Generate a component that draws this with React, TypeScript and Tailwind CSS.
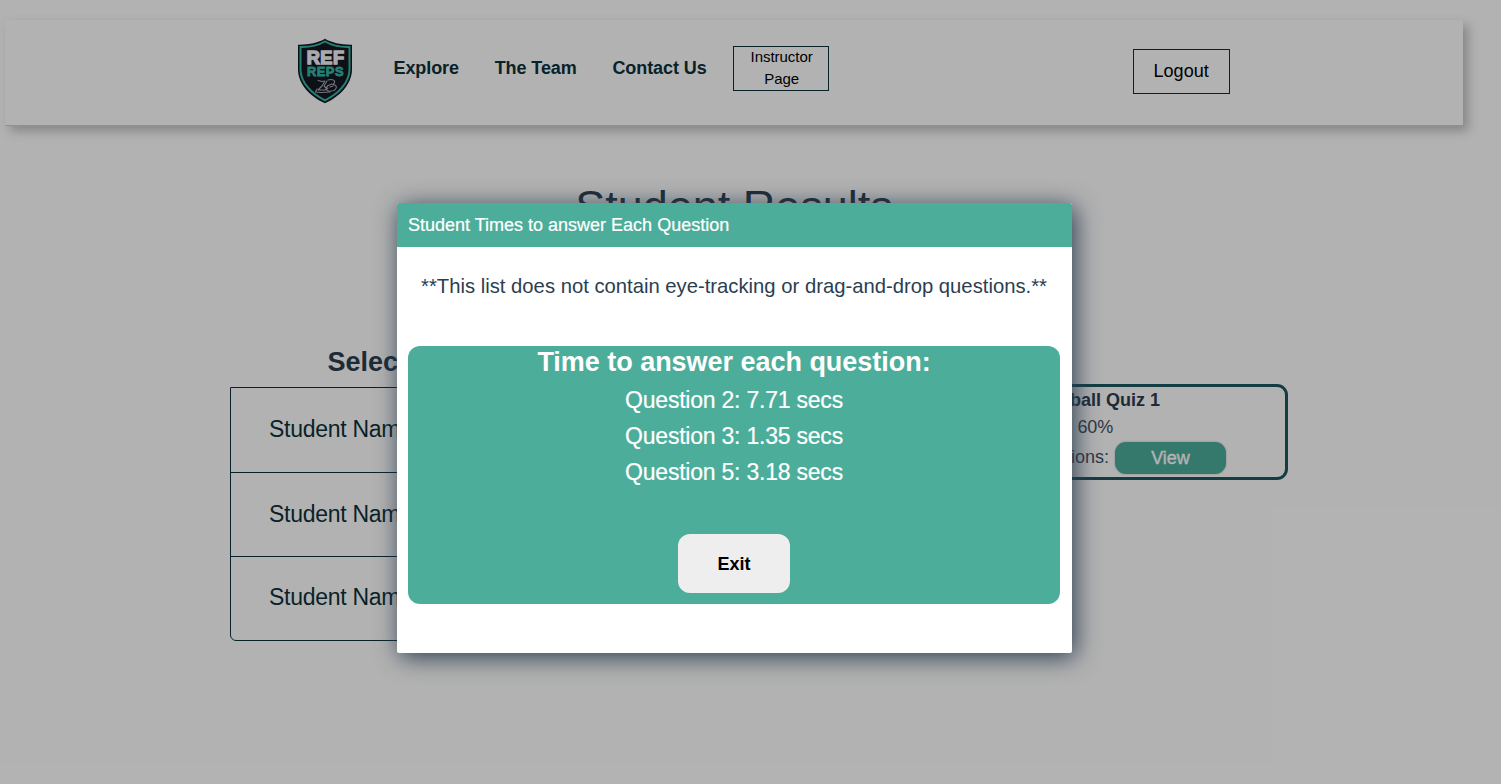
import React from "react";

const students = ["Student Name 1", "Student Name 2", "Student Name 3"];
const times = [
  { question: 2, secs: "7.71" },
  { question: 3, secs: "1.35" },
  { question: 5, secs: "3.18" },
];

function Logo() {
  return (
    <svg className="h-[66px] w-[56px]" viewBox="0 0 56 66" fill="none">
      <path d="M28 .8C21 5 11 7 1 6.7V32C1.500 47 14 59 28 65.300C42 59 54.500 47 55 32V6.700C45 7 35 5 28 .8Z" fill="#141722" />
      <path d="M28 3.500C21 7.500 12 9.300 3.500 9V32C4 45 15 56 28 62.300C41 56 52 45 52.500 32V9C44 9.300 35 7.500 28 3.500Z" stroke="#35b8a6" strokeWidth="2" />
      <text x="28.700" y="25.800" textAnchor="middle" textLength="38" lengthAdjust="spacingAndGlyphs" fontWeight="bold" letterSpacing=".6" fontFamily="Liberation Sans, sans-serif" fontSize="19" fill="#f4f4f6" stroke="#f4f4f6" strokeWidth="1.500">REF</text>
      <text x="28.500" y="38" textAnchor="middle" textLength="37" lengthAdjust="spacingAndGlyphs" fontWeight="bold" letterSpacing=".5" fontFamily="Liberation Sans, sans-serif" fontSize="12.500" fill="#35b8a6" stroke="#35b8a6" strokeWidth=".8">REPS</text>
      <g stroke="#a6a8b5" strokeWidth="1.100" strokeLinecap="round" strokeLinejoin="round">
        <path d="M21 42.500L25 43.500L28 43L25 48L21 52H28L31 50" />
        <path d="M31 42C36 40.500 40 43 36 46.500C42 47.500 39 53 34 53C29 54 28 50 31 47.500L35 46" />
        <path d="M20 51L18.500 54L24 54.500L33 54M30 43L27 48L29 50M33 49L36 48" />
      </g>
    </svg>
  );
}

export default function App() {
  return (
    <div className="relative h-[784px] w-[1501px] overflow-hidden bg-white pl-[5px] pt-5 font-['Liberation_Sans',Arial,sans-serif] text-[#2c3e50]">
      <nav className="flex h-[106px] w-[1458px] items-start border-b border-[#d0d0d0] pl-[292px] pt-[18px] shadow-[5px_5px_10px_rgba(0,0,0,0.25)]">
        <Logo />
        <div className="ml-[40.5px] mt-4 flex gap-[35.700px] text-[18px] font-bold leading-7 tracking-[-0.08px] text-[#0e323a]">
          <a>Explore</a>
          <a>The Team</a>
          <a>Contact Us</a>
        </div>
        <button className="ml-[26px] mt-2 h-[45px] w-24 border border-[#0e323a] pl-3.5 pr-3 text-[15px] leading-[22px] tracking-[-0.05px] text-black">
          <span className="-mt-0.5 block">Instructor Page</span>
        </button>
        <button className="ml-[304px] mt-[11px] h-[45px] w-[97px] border border-[#0e323a] text-[18px] leading-[43px] text-black">
          Logout
        </button>
      </nav>

      <h1 className="mt-[54px] w-[1458px] text-center text-[45px] leading-[54px]">Student Results</h1>

      <main className="ml-[225px] mt-[109px] flex w-[1058px] justify-between">
        <section className="w-[416px]">
          <h2 className="h-[44px] pr-[11px] pt-px text-center text-[27px] font-bold leading-[36px]">Select a Student</h2>
          <ul className="rounded-b-md border border-[#0e323a] text-[23px] tracking-[-0.28px] text-[#0e323a]">
            {students.map((name) => (
              <li key={name} className="h-[84px] border-b border-[#0e323a] pl-[38px] leading-[83px] first:h-[85px] last:h-[83px] last:border-b-0 last:leading-[81px]">
                {name}
              </li>
            ))}
          </ul>
        </section>
        <section className="mt-[41px] flex h-24 w-[385px] flex-col items-end rounded-[11px] border-[3px] border-[#1e5660] text-[18px]">
          <div className="mr-[125px] mt-px h-[25px] font-bold leading-[25px]">Football Quiz 1</div>
          <div className="mr-[172px] h-[29px] leading-[29px] tracking-[-0.2px] text-[#3f5061]">Score: 60%</div>
          <div className="mr-[59px] flex items-center gap-[6px]">
            <span className="pb-0.5 text-[#3f5061]">Questions:</span>
            <button className="h-8 w-[111px] rounded-[11px] bg-[#4dae9b] text-white shadow-[0_0_2px_rgba(0,0,0,0.3)] [-webkit-text-stroke:0.4px_white]">View</button>
          </div>
        </section>
      </main>

      <div className="absolute inset-0 flex items-start justify-center bg-black/30 pr-8 pt-[203px]">
        <div className="h-[450px] w-[675px] rounded-[2px] bg-white shadow-[3px_4px_24px_#2c3e50]">
          <header className="h-11 truncate rounded-t-[2px] bg-[#4cae9a] pl-[11px] text-[18px] leading-[44px] text-white [-webkit-text-stroke:0.2px_white]">
            Student Times to answer Each Question
          </header>
          <p className="mt-[24px] pr-px text-center text-[20.250px] leading-[30px]">
            **This list does not contain eye-tracking or drag-and-drop questions.**
          </p>
          <div className="ml-[11px] mt-[45px] flex h-[258px] w-[652px] flex-col items-center rounded-xl bg-[#4cae9a] text-white">
            <h3 className="h-9 pt-px text-[27px] font-bold leading-[31px] tracking-[-0.03px]">Time to answer each question:</h3>
            {times.map((t) => (
              <div key={t.question} className="text-[23px] leading-9 tracking-[-0.22px] [-webkit-text-stroke:0.2px_white]">
                Question {t.question}: {t.secs} secs
              </div>
            ))}
            <button className="mt-[44px] h-[59px] w-28 rounded-xl bg-[#eee] pt-0.5 text-[18px] font-bold text-black">Exit</button>
          </div>
        </div>
      </div>
    </div>
  );
}
